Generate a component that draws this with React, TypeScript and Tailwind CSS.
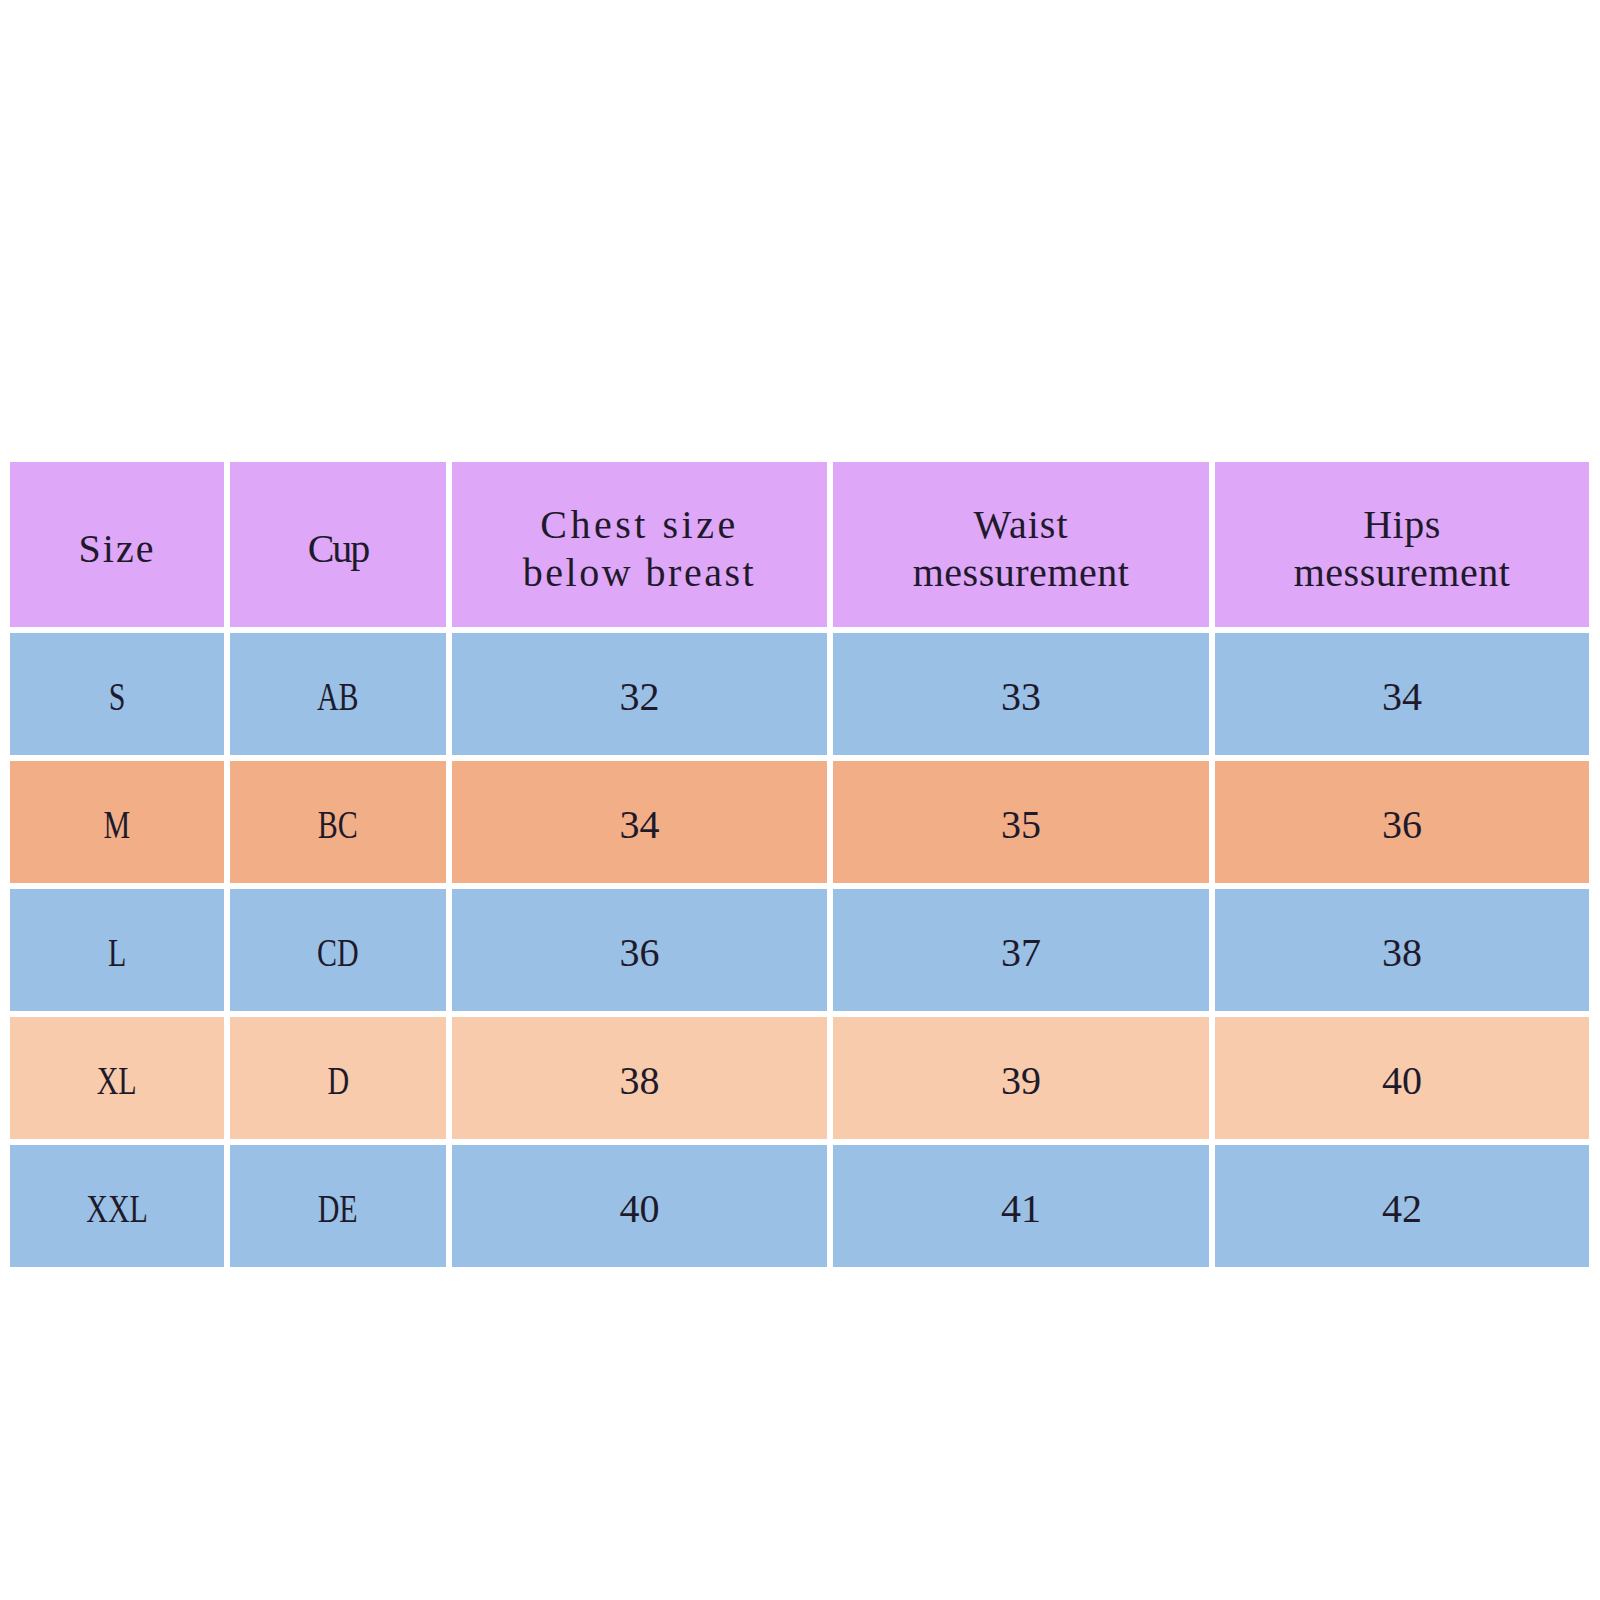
import React from "react";

const font = { fontFamily: '"Liberation Serif", "DejaVu Serif", serif' };

const headers: [string, string][][] = [
  [["Size", "tracking-[2px]"]],
  [["Cup", "tracking-[-2px]"]],
  [
    ["Chest size", "tracking-[3.5px]"],
    ["below breast", "tracking-[2.5px]"],
  ],
  [
    ["Waist", "tracking-[1px]"],
    ["messurement", "tracking-[0.5px]"],
  ],
  [
    ["Hips", "tracking-[0.5px]"],
    ["messurement", "tracking-[0.5px]"],
  ],
];

const rows = [
  { cells: ["S", "AB", "32", "33", "34"], bg: "bg-[#9bc0e5]" },
  { cells: ["M", "BC", "34", "35", "36"], bg: "bg-[#f2ae86]" },
  { cells: ["L", "CD", "36", "37", "38"], bg: "bg-[#9bc0e5]" },
  { cells: ["XL", "D", "38", "39", "40"], bg: "bg-[#f7cbab]" },
  { cells: ["XXL", "DE", "40", "41", "42"], bg: "bg-[#9bc0e5]" },
];

export default function App() {
  return (
    <div className="w-[1600px] h-[1600px] bg-white pt-[462px] pl-[10px]" style={font}>
      <div className="grid grid-cols-[214px_216px_375px_376px_374px] grid-rows-[165px_122px_122px_122px_122px_122px] gap-x-[6px] gap-y-[6px] text-[40px] text-[#1e1a2c]">
        {headers.map((lines, i) => (
          <div key={i} className="bg-[#dea7f7] flex flex-col items-center justify-center pt-[8px]">
            {lines.map(([l, t], k) => (
              <span key={k} className={`leading-[48px] whitespace-pre ${t}`}>
                {l}
              </span>
            ))}
          </div>
        ))}
        {rows.map((r) =>
          r.cells.map((c, j) => (
            <div key={r.cells[0] + j} className={`${r.bg} flex items-center justify-center pt-[6px]`}>
              <span className={j < 2 ? "inline-block scale-x-75" : "inline-block"}>{c}</span>
            </div>
          ))
        )}
      </div>
    </div>
  );
}
